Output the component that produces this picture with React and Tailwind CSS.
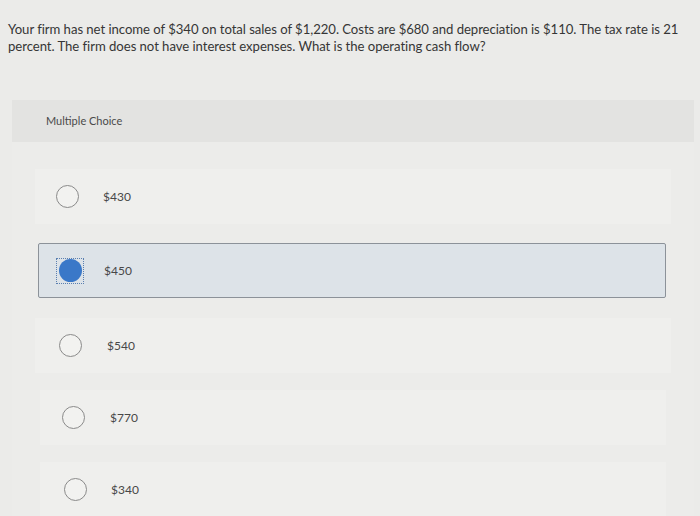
import React from 'react';

const options = [
  { id: 'a', label: '$430', pad: 'pl-[21px]', gap: 'gap-[24px]', row: 'mx-[23px]' },
  { id: 'b', label: '$450', selected: true },
  { id: 'c', label: '$540', pad: 'pl-[24px]', gap: 'gap-[25px]', row: 'mx-[23px]' },
  { id: 'd', label: '$770', pad: 'pl-[22px]', gap: 'gap-[25px]', row: 'mx-[28px]' },
  { id: 'e', label: '$340', pad: 'pl-[24px]', gap: 'gap-[24px]', row: 'mx-[28px]' },
];

const App = () => {
  return (
    <div
      className="w-[700px] h-[516px] overflow-hidden bg-[#ebebe9] text-[#363636]"
      style={{ fontFamily: 'Lato, "Open Sans", sans-serif' }}
    >
      {/* Question */}
      <div className="pl-[8px] pr-[8px] pt-[21px] text-[13.15px] leading-[17px] tracking-[-0.05px]">
        Your firm has net income of $340 on total sales of $1,220. Costs are $680 and depreciation is $110. The tax rate is 21
        percent. The firm does not have interest expenses. What is the operating cash flow?
      </div>

      {/* Panel */}
      <div className="mt-[45px] ml-[12px] mr-[6px] bg-[#ececea]">
        <div className="h-[42px] bg-[#e3e3e1] flex items-center pl-[34px] text-[11px] text-[#4a4a4a]">
          Multiple Choice
        </div>

        <div className="pt-[27px] flex flex-col">
          {options.map((opt, i) =>
            opt.selected ? (
              <div
                key={opt.id}
                className="mt-[19px] ml-[26px] mr-[28px] h-[55px] flex items-center gap-[20px] pl-[17px] border border-[#8c9299] rounded-[2px] bg-[#dde3e8]"
              >
                <div className="w-[28px] h-[26px] flex items-center justify-center border border-dotted border-[#5a7fb0]">
                  <div className="w-[23px] h-[23px] rounded-full bg-[#3a78c8]" />
                </div>
                <span className="text-[12px] text-[#484848]">{opt.label}</span>
              </div>
            ) : (
              <div
                key={opt.id}
                className={`${i === 0 ? '' : i > 2 ? 'mt-[17px]' : 'mt-[20px]'} ${opt.row} h-[55px] flex items-center ${opt.gap} ${opt.pad} bg-[#efefed]`}
              >
                <div className="w-[23px] h-[23px] rounded-full border-[1.5px] border-[#8a8a8a] bg-[#f2f2f0]" />
                <span className="text-[12px] text-[#484848]">{opt.label}</span>
              </div>
            )
          )}
        </div>
      </div>
    </div>
  );
};

export default App;
